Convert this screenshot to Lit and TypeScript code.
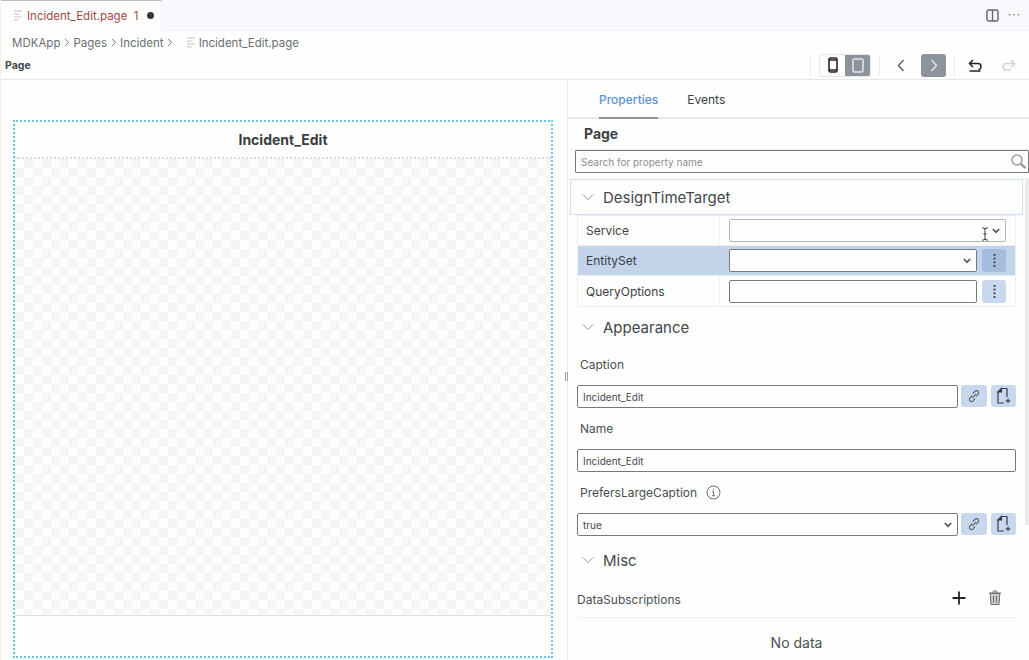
import { LitElement, html, css, svg } from 'lit';
import { customElement } from 'lit/decorators.js';

const fileIcon = html`<svg width="8" height="11" viewBox="0 0 8 11" fill="none" stroke="#c4c4c8" stroke-width="1.2">
  <path d="M0 1h8M0 4h5.5M0 7h8M0 10h4.5" />
</svg>`;

const chevron = html`<svg width="12" height="8" viewBox="0 0 12 8" fill="none" stroke="#8f9093" stroke-width="1">
  <path d="M1 1.5l5 5 5-5" />
</svg>`;

const selectCaret = html`<svg class="caret" width="8" height="6" viewBox="0 0 8 6" fill="none" stroke="#55585c" stroke-width="1.7">
  <path d="M.8 1L4 4.2 7.2 1" />
</svg>`;

const dots = html`<svg width="3" height="13" viewBox="0 0 3 13" fill="#3a3d42">
  <rect x=".5" y="0" width="2" height="1.7" /><rect x=".5" y="3.7" width="2" height="1.7" />
  <rect x=".5" y="7.4" width="2" height="1.7" /><rect x=".5" y="11.1" width="2" height="1.7" />
</svg>`;

const linkIcon = html`<svg width="14" height="14" viewBox="0 0 14 14" fill="none" stroke="#55585e" stroke-width="1.1">
  <path d="M6 4.4l2-2.2a2.1 2.1 0 013 3L9 7.4" />
  <path d="M8 9.6l-2 2.2a2.1 2.1 0 01-3-3L5 6.6" />
  <path d="M5.2 8.8l3.6-3.6" />
</svg>`;

const newFileIcon = html`<svg width="16" height="18" viewBox="0 0 16 18" fill="none" stroke="#3a3d42" stroke-width="1.2">
  <path d="M8 16H2V5l3.5-3.5H11V10" />
  <path d="M2 5l3.5-3.5V5z" fill="#3a3d42" />
  <path d="M12 11.5v4.5M9.8 13.8h4.4" />
</svg>`;

const actionButtons = html`<button class="square">${linkIcon}</button><button class="square">${newFileIcon}</button>`;

@customElement('app-root')
export class AppRoot extends LitElement {
  static styles = css`
    :host {
      display: block;
      width: 1029px;
      height: 660px;
      overflow: hidden;
      position: relative;
      background: #fefefe;
      color: #3c3e42;
      font-family: Inter, 'Liberation Sans', sans-serif;
      border-left: 1px solid #fdeee2;
      box-sizing: border-box;
    }

    .tabbar {
      height: 31px;
      display: flex;
      justify-content: space-between;
      align-items: center;
      background: #f8f8fc;
      border-bottom: 1px solid #efeff2;
      box-sizing: border-box;
    }

    .tab {
      width: 161px;
      height: 31px;
      display: flex;
      align-items: center;
      gap: 5px;
      padding-left: 13px;
      box-sizing: border-box;
      background: #fefefe;
      border-top: 1px solid #b6bcc6;
      border-right: 1px solid #efeff2;
      font-size: 11.5px;
      color: #a04a4c;
    }

    .tab .dot {
      width: 7px;
      height: 7px;
      border-radius: 50%;
      background: #35373b;
      margin-left: 3px;
    }

    .window-actions {
      display: flex;
      align-items: center;
      gap: 9px;
      padding-right: 8px;
    }

    .more {
      font-size: 12px;
      letter-spacing: 1px;
      color: #74767a;
      line-height: 1;
    }

    .crumbs {
      height: 23px;
      display: flex;
      align-items: center;
      gap: 3.5px;
      padding-left: 11px;
      font-size: 11.5px;
      color: #6c6e72;
    }

    .crumbs .sep {
      display: flex;
    }

    .crumbs .file {
      margin-left: 10px;
      display: flex;
      align-items: center;
      gap: 4px;
    }

    .toolbar {
      height: 26px;
      display: flex;
      align-items: center;
      justify-content: space-between;
      padding: 0 8px 3px 4px;
      box-sizing: border-box;
      border-bottom: 1px solid #e8e8ea;
      font-size: 10.5px;
      font-weight: 700;
      color: #45474b;
    }

    .tools {
      display: flex;
      align-items: center;
      gap: 8px;
    }

    .vline {
      width: 1px;
      height: 22px;
      background: #ececee;
    }

    .device-toggle {
      display: flex;
      border: 1px solid #e6e6e8;
      border-radius: 3px;
      overflow: hidden;
      height: 23px;
      box-sizing: border-box;
    }

    .device-toggle span {
      width: 25px;
      display: flex;
      align-items: center;
      justify-content: center;
    }

    .device-toggle .on {
      background: #8d939c;
    }

    .nav {
      width: 25px;
      height: 23px;
      display: flex;
      align-items: center;
      justify-content: center;
      border-radius: 3px;
    }

    .nav.on {
      background: #8d939c;
    }

    .main {
      display: flex;
      height: 580px;
    }

    .canvas {
      width: 567px;
      padding: 40px 0 0 12px;
      box-sizing: border-box;
      border-right: 1px solid #ececee;
      position: relative;
    }

    .grip {
      position: absolute;
      right: -1px;
      top: 292px;
      width: 3px;
      height: 9px;
      background: repeating-linear-gradient(90deg, #9a9da1 0 1px, #fefefe 1px 2px);
    }

    .frame {
      width: 540px;
      height: 538px;
      border: 2px dotted #6ac4ec;
      box-sizing: border-box;
      display: flex;
      flex-direction: column;
    }

    .frame-title {
      height: 37px;
      padding-bottom: 1px;
      box-sizing: border-box;
      display: flex;
      align-items: center;
      justify-content: center;
      font-size: 14px;
      font-weight: 700;
      color: #3b3d41;
      border-bottom: 2px dotted #d5dbe2;
    }

    .checker {
      flex: 1;
      background: repeating-conic-gradient(#f5f5f5 0 25%, #fcfdfd 0 50%) 0 0 / 18px 18px;
      border-bottom: 1px solid #dedfe0;
    }

    .frame-foot {
      height: 40px;
    }

    .panel {
      flex: 1;
      position: relative;
      min-width: 0;
    }

    .panel-tabs {
      height: 39px;
      display: flex;
      gap: 29px;
      padding-left: 31px;
      border-bottom: 2px solid #eaeaec;
      box-sizing: border-box;
      font-size: 12px;
    }

    .panel-tabs span {
      height: 39px;
      box-sizing: border-box;
      padding-top: 12px;
    }

    .panel-tabs .active {
      color: #5a94d8;
      font-weight: 500;
      border-bottom: 2px solid #8b929c;
    }

    .panel-title {
      height: 31px;
      display: flex;
      align-items: center;
      padding: 0 0 2px 16px;
      box-sizing: border-box;
      font-size: 14px;
      font-weight: 700;
      color: #3f4145;
      border-bottom: 1px solid #f0f0f2;
    }

    .search {
      height: 23px;
      margin-left: 7px;
      border: 1px solid #77797d;
      border-radius: 1px;
      box-sizing: border-box;
      display: flex;
      align-items: center;
      justify-content: space-between;
      padding: 0 1px 0 5px;
      font-size: 10px;
      color: #8c8e92;
    }

    .section {
      height: 34px;
      display: flex;
      align-items: center;
      gap: 9px;
      padding-left: 14px;
      font-size: 15px;
      font-weight: 400;
      color: #45474b;
    }

    .section.focus {
      width: 453px;
      height: 36px;
      margin: 6px 0 0 2px;
      box-sizing: border-box;
      border: 1px solid #cfe0f0;
      padding-left: 11px;
    }

    .section.appearance {
      margin-top: 3px;
    }

    .section.misc {
      margin-top: 7px;
    }

    .grid {
      margin-left: 9px;
      width: 439px;
      border: 1px solid #efeff1;
      box-sizing: border-box;
      font-size: 12px;
    }

    .row {
      height: 30px;
      display: grid;
      grid-template-columns: 133px 1fr;
      align-items: center;
      border-bottom: 1px solid #efeff1;
      box-sizing: border-box;
      padding-left: 8px;
    }

    .row:last-child {
      border-bottom: 0;
    }

    .row.selected {
      background: #c2d3ea;
    }

    .row .value {
      height: 100%;
      display: flex;
      align-items: center;
      gap: 5px;
      border-left: 1px solid #efeff1;
      padding-left: 9px;
    }

    .row.selected .value {
      border-left-color: transparent;
    }

    .input {
      height: 23px;
      flex: 1;
      min-width: 0;
      border: 1px solid #77797d;
      border-radius: 2px;
      background: #fefefe;
      box-sizing: border-box;
      display: flex;
      align-items: center;
      justify-content: space-between;
      padding: 0 5px;
      font-size: 10px;
      color: #46484c;
    }

    .input.pale {
      border-color: #b4b5b8;
    }

    .row .value > .input.wide {
      flex: none;
      width: 277px;
    }

    .dots {
      width: 24px;
      height: 23px;
      margin-right: 9px;
      border: 0;
      border-radius: 3px;
      background: #c8d8ee;
      display: flex;
      align-items: center;
      justify-content: center;
      padding: 0;
    }

    .row.selected .dots {
      background: #a5bcdf;
    }

    .props {
      width: 439px;
      margin-left: 9px;
      font-size: 12px;
    }

    .prop-label {
      height: 41px;
      display: flex;
      align-items: center;
      gap: 9px;
      padding-left: 3px;
      color: #4c4e52;
    }

    .prop-row {
      display: flex;
      gap: 3px;
    }

    .square {
      width: 26px;
      height: 22px;
      border: 0;
      padding: 0;
      border-radius: 3px;
      background: #c8d8ee;
      display: flex;
      align-items: center;
      justify-content: center;
    }

    .prop-row .square + .square {
      margin-left: 1px;
      width: 25px;
    }

    .subs {
      height: 36px;
      margin: 5px 0 0 9px;
      width: 439px;
      display: flex;
      align-items: center;
      justify-content: space-between;
      border-bottom: 1px solid #f0f0f2;
      font-size: 12px;
      color: #4c4e52;
      box-sizing: border-box;
    }

    .subs .icons {
      display: flex;
      align-items: center;
      gap: 22px;
      padding: 0 14px 3px 0;
    }

    .no-data {
      margin-left: 9px;
      width: 439px;
      padding-top: 16px;
      text-align: center;
      font-size: 14px;
      color: #4c4e52;
    }

    .scrollbar {
      position: absolute;
      right: 0;
      top: 98px;
      width: 4px;
      height: 347px;
      background: #ececef;
    }

    .cursor {
      position: absolute;
      left: 413px;
      top: 147px;
    }
  `;

  private _crumbSep() {
    return html`<span class="sep"><svg width="6" height="9" viewBox="0 0 6 9" fill="none" stroke="#77797d" stroke-width="1">
      <path d="M1 .8l3.6 3.7L1 8.2" />
    </svg></span>`;
  }

  private _renderToolbar() {
    return html`<div class="toolbar">
      <span>Page</span>
      <div class="tools">
        <span class="vline"></span>
        <div class="device-toggle">
          <span><svg width="10" height="16" viewBox="0 0 10 16" fill="none" stroke="#232427" stroke-width="1.6">
            <rect x="1" y="1" width="8" height="14" rx="1.5" /><path d="M1 3h8M1 13h8" />
          </svg></span>
          <span class="on"><svg width="12" height="15" viewBox="0 0 12 15" fill="none" stroke="#e6e7e9" stroke-width="1.5">
            <rect x="1" y="1" width="10" height="13" rx="1.5" />
          </svg></span>
        </div>
        <span class="vline"></span>
        <span class="nav"><svg width="8" height="13" viewBox="0 0 8 13" fill="none" stroke="#5a5c60" stroke-width="1.4">
          <path d="M6.5 1L1.5 6.5l5 5.5" />
        </svg></span>
        <span class="nav on"><svg width="8" height="13" viewBox="0 0 8 13" fill="none" stroke="#e6e7e9" stroke-width="1.4">
          <path d="M1.5 1l5 5.5-5 5.5" />
        </svg></span>
        <span class="vline"></span>
        <span class="nav"><svg width="15" height="13" viewBox="0 0 15 13" fill="none" stroke="#232427" stroke-width="1.5">
          <path d="M5 1L1.5 4.5 5 8" /><path d="M1.5 4.5H10a3 3 0 013 3V8a2.5 2.5 0 01-2.5 2.5" /><path d="M1.5 12h11" />
        </svg></span>
        <span class="nav"><svg width="15" height="13" viewBox="0 0 15 13" fill="none" stroke="#d2d3d5" stroke-width="1.5">
          <path d="M10 1l3.5 3.5L10 8" /><path d="M13.5 4.5H5a3 3 0 00-3 3V8a3 3 0 003 3h5" />
        </svg></span>
      </div>
    </div>`;
  }

  private _renderPanel() {
    return html`<section class="panel">
      <div class="panel-tabs"><span class="active">Properties</span><span>Events</span></div>
      <div class="panel-title">Page</div>
      <div class="search">
        <span>Search for property name</span>
        <svg width="17" height="17" viewBox="0 0 17 17" fill="none" stroke="#9a9ca0" stroke-width="1.5">
          <circle cx="7" cy="7" r="5" /><path d="M10.8 10.8l4.7 4.2" stroke-width="2.4" />
        </svg>
      </div>
      <div class="section focus">${chevron}<span>DesignTimeTarget</span></div>
      <div class="grid">
        <div class="row">
          <span>Service</span>
          <div class="value"><div class="input pale wide"><span></span>${selectCaret}</div></div>
        </div>
        <div class="row selected">
          <span>EntitySet</span>
          <div class="value"><div class="input"><span></span>${selectCaret}</div><button class="dots">${dots}</button></div>
        </div>
        <div class="row">
          <span>QueryOptions</span>
          <div class="value"><div class="input"></div><button class="dots">${dots}</button></div>
        </div>
      </div>
      <div class="section appearance">${chevron}<span>Appearance</span></div>
      <div class="props">
        <div class="prop-label">Caption</div>
        <div class="prop-row"><div class="input">Incident_Edit</div>${actionButtons}</div>
        <div class="prop-label">Name</div>
        <div class="prop-row"><div class="input">Incident_Edit</div></div>
        <div class="prop-label">PrefersLargeCaption
          <svg width="15" height="15" viewBox="0 0 15 15" fill="none" stroke="#6a6c70" stroke-width="1">
            <circle cx="7.5" cy="7.5" r="6.5" /><path d="M6.2 6.5h1.5v4M6 10.7h3.2M7.5 3.8v1.4" />
          </svg>
        </div>
        <div class="prop-row"><div class="input">true${selectCaret}</div>${actionButtons}</div>
      </div>
      <div class="section misc">${chevron}<span>Misc</span></div>
      <div class="subs">
        <span>DataSubscriptions</span>
        <div class="icons">
          <svg width="14" height="14" viewBox="0 0 14 14" stroke="#232427" stroke-width="1.8"><path d="M7 .5v13M.5 7h13" /></svg>
          <svg width="14" height="16" viewBox="0 0 14 16" fill="#8d8f93" stroke="#6a6c70" stroke-width="1">
            ${svg`<path d="M1 3h12M5 3l.5-2h3L9 3" fill="none" />
            <path d="M2.2 3.5h9.6l-.8 11H3z" fill="#c9cacc" />
            <path d="M5.5 6v6.5M8.5 6v6.5" fill="none" />`}
          </svg>
        </div>
      </div>
      <div class="no-data">No data</div>
      <div class="scrollbar"></div>
      <svg class="cursor" width="8" height="14" viewBox="0 0 8 14" fill="none" stroke="#3a3c40" stroke-width="1">
        <path d="M1 1h2l1 1 1-1h2M4 2v10M1 13h2l1-1 1 1h2M2.5 7h3" />
      </svg>
    </section>`;
  }

  render() {
    return html`
      <div class="tabbar">
        <div class="tab">${fileIcon}<span>Incident_Edit.page&nbsp; 1</span><span class="dot"></span></div>
        <div class="window-actions">
          <svg width="13" height="13" viewBox="0 0 13 13" fill="none" stroke="#63656a" stroke-width="1.4">
            <rect x="1" y="1" width="11" height="11" rx="2" /><path d="M6.5 1v11" />
          </svg>
          <span class="more">···</span>
        </div>
      </div>
      <div class="crumbs">
        <span>MDKApp</span>${this._crumbSep()}<span>Pages</span>${this._crumbSep()}<span>Incident</span>${this._crumbSep()}
        <span class="file">${fileIcon}<span>Incident_Edit.page</span></span>
      </div>
      ${this._renderToolbar()}
      <div class="main">
        <section class="canvas">
          <div class="frame">
            <div class="frame-title">Incident_Edit</div>
            <div class="checker"></div>
            <div class="frame-foot"></div>
          </div>
          <span class="grip"></span>
        </section>
        ${this._renderPanel()}
      </div>
    `;
  }
}
